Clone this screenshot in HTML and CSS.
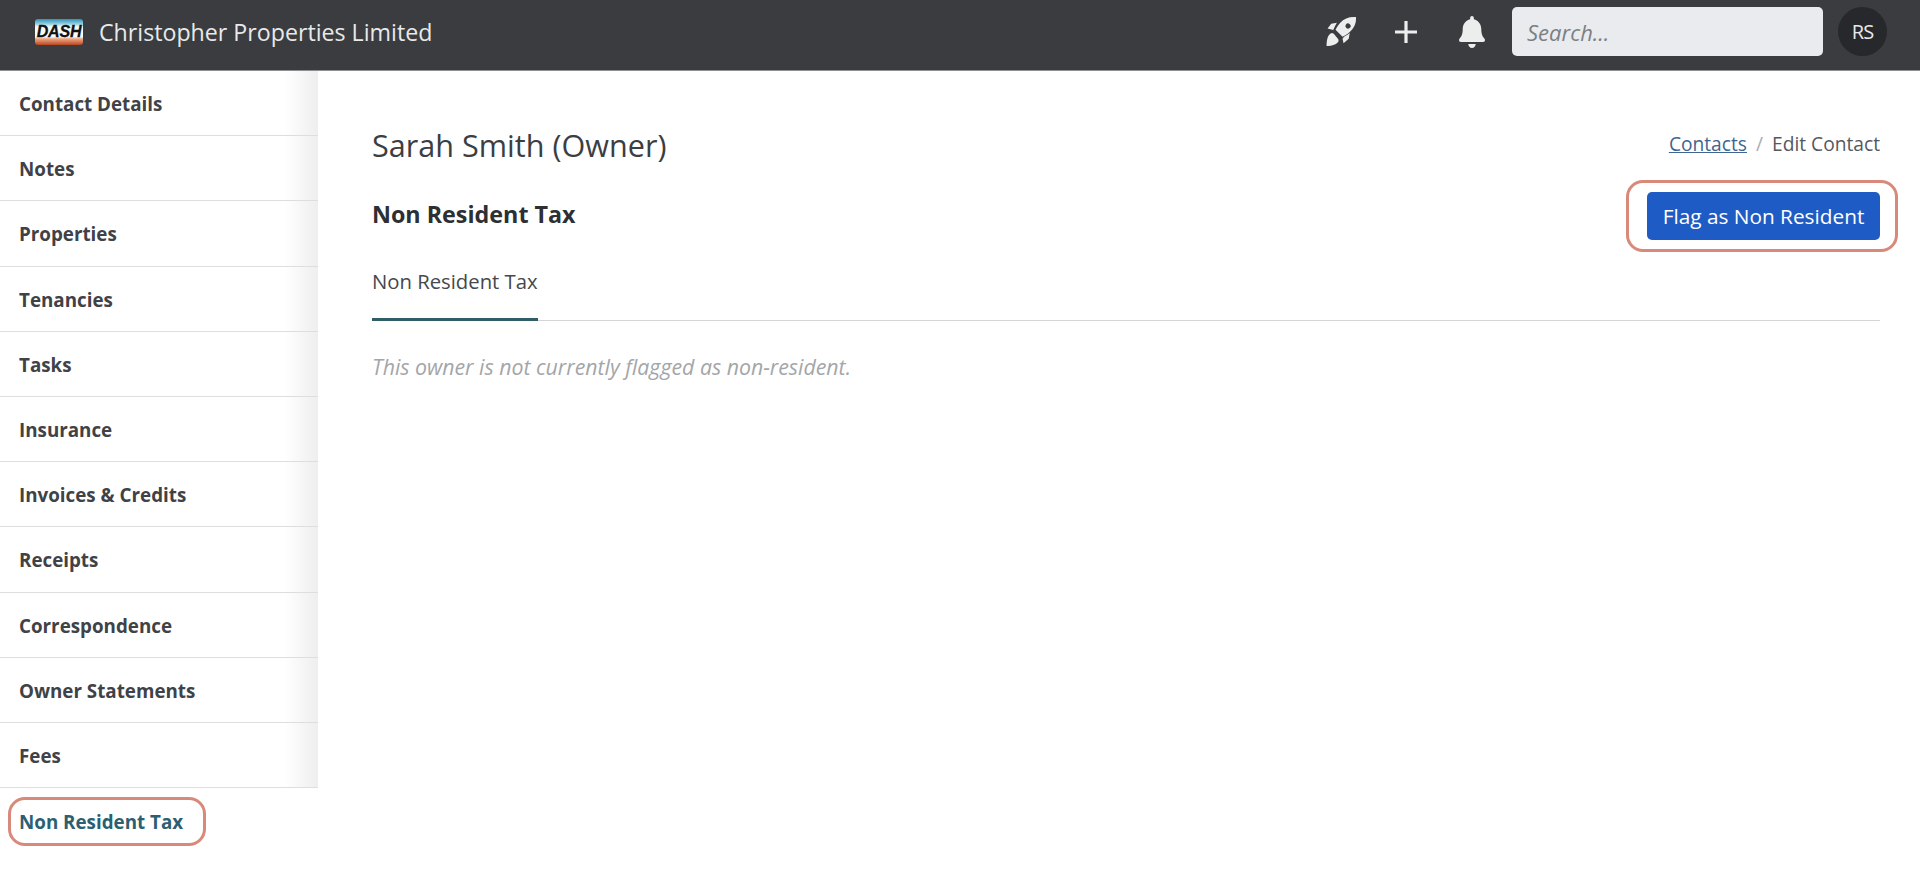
FILE: index.html
```html
<!DOCTYPE html>
<html lang="en">
<head>
  <meta charset="UTF-8" />
  <title>Non Resident Tax</title>
  <link rel="stylesheet" href="styles.css">
</head>
<body>

<header class="topbar">
  <div class="logo"><span>DASH</span></div>
  <div class="company">Christopher Properties Limited</div>
  <div class="topbar-tools">
    <svg class="icon-rocket" viewBox="0 0 32 32" aria-hidden="true">
      <path fill-rule="evenodd" d="M30 2c-6-.6-11.600 1.400-15.200 5.400-2 2.200-3.400 4.600-4.600 7l6.800 6.800c2.400-1.200 4.800-2.600 7-4.600C28 13 30.600 8 30 2zM20.300 9.200a2.500 2.500 0 1 1 3.500 3.500 2.500 2.500 0 0 1-3.500-3.500z"/>
      <path d="M11.500 7.500 6 8.500 2.500 13l5.500 1.500c1-2.600 2.200-4.900 3.500-7z"/>
      <path d="M18.500 21c2-1 4-2.300 5.500-3.500l-1 5.500-5 4.500-1-4.500z"/>
      <path d="M6.500 17.500c-2.800.8-4.800 4-5 12.500 3 .5 8.500-.5 11-3.500 1-1.200.8-2.800-.2-3.800l-3-3.500c-.8-1-1.800-1.900-2.800-1.700z"/>
    </svg>
    <svg class="icon-plus" viewBox="0 0 24 24" aria-hidden="true">
      <path d="M10.400 1h3.200v9.400H23v3.200h-9.400V23h-3.200v-9.400H1v-3.200h9.400z"/>
    </svg>
    <svg class="icon-bell" viewBox="0 0 448 512" preserveAspectRatio="none" aria-hidden="true">
      <path d="M224 512c35.320 0 63.970-28.650 63.970-64H160.030c0 35.350 28.650 64 63.970 64zm215.390-149.710c-19.320-20.760-55.470-51.990-55.470-154.290 0-77.700-54.480-139.900-127.940-155.160V32c0-17.670-14.320-32-31.980-32s-31.980 14.330-31.980 32v20.840C118.560 68.100 64.080 130.300 64.080 208c0 102.300-36.150 133.530-55.470 154.290-6 6.450-8.660 14.160-8.610 21.710.11 16.400 12.980 32 32.100 32h383.800c19.120 0 32-15.600 32.100-32 .05-7.550-2.610-15.270-8.610-21.710z"/>
    </svg>
    <input class="search" type="text" placeholder="Search...">
    <div class="avatar">RS</div>
  </div>
</header>

<div class="layout">
  <nav class="sidebar">
    <a class="nav-item">Contact Details</a>
    <a class="nav-item">Notes</a>
    <a class="nav-item">Properties</a>
    <a class="nav-item">Tenancies</a>
    <a class="nav-item">Tasks</a>
    <a class="nav-item">Insurance</a>
    <a class="nav-item">Invoices &amp; Credits</a>
    <a class="nav-item">Receipts</a>
    <a class="nav-item">Correspondence</a>
    <a class="nav-item">Owner Statements</a>
    <a class="nav-item">Fees</a>
    <a class="nav-item active"><span class="callout callout-nav">Non Resident Tax</span></a>
  </nav>

  <main class="content">
    <div class="title-row">
      <h1>Sarah Smith (Owner)</h1>
      <div class="breadcrumb"><a href="#">Contacts</a><span class="sep">/</span><span>Edit Contact</span></div>
    </div>
    <div class="section-row">
      <h2>Non Resident Tax</h2>
      <span class="callout callout-btn"><button class="btn-primary" type="button">Flag as Non Resident</button></span>
    </div>
    <div class="tabs">
      <div class="tab">Non Resident Tax</div>
    </div>
    <p class="empty-note">This owner is not currently flagged as non-resident.</p>
  </main>
</div>

</body>
</html>
```

FILE: styles.css
```css
* {
  box-sizing: border-box;
}

body {
  margin: 0;
  font-family: "Open Sans", "Noto Sans", sans-serif;
  background: #fff;
  color: #3b3e42;
}

/* top bar */
.topbar {
  display: flex;
  align-items: center;
  height: 71px;
  padding: 0 33px 7px 35px;
  background: #3a3c40;
  border-bottom: 1px solid #8d8f92;
}

.logo {
  width: 48px;
  height: 26px;
  border-radius: 3px;
  background: linear-gradient(#2f93b8 0, #8fcde0 18%, #f4fafc 30%, #fff 68%, #eea985 76%, #b9451f 100%);
  display: flex;
  align-items: center;
  justify-content: center;
}

.logo span {
  font-family: "Liberation Sans", sans-serif;
  font-weight: bold;
  font-style: italic;
  font-size: 16px;
  letter-spacing: -.2px;
  color: #111;
  -webkit-text-stroke: .3px #111;
}

.company {
  margin-left: 16px;
  font-size: 23.200px;
  color: #e8e9ea;
}

.topbar-tools {
  margin-left: auto;
  display: flex;
  align-items: center;
}

.topbar-tools svg {
  fill: #eceded;
  display: block;
}

.icon-rocket {
  width: 33px;
  height: 33px;
}

.icon-plus {
  width: 24px;
  height: 24px;
  margin-left: 36px;
}

.icon-bell {
  width: 26px;
  height: 32px;
  margin-left: 41px;
}

.search {
  width: 311px;
  height: 49px;
  margin-left: 27px;
  padding: 0 15px;
  border: 0;
  border-radius: 5px;
  background: #e9ebee;
  font-family: inherit;
  font-size: 22px;
}

.search::placeholder {
  color: #7c8085;
  font-style: italic;
}

.avatar {
  width: 49px;
  height: 49px;
  margin-left: 15px;
  border-radius: 50%;
  background: #26282b;
  color: #e8e9ea;
  font-size: 20px;
  letter-spacing: -1px;
  display: flex;
  align-items: center;
  justify-content: center;
}

/* page */
.layout {
  display: flex;
}

.sidebar {
  width: 318px;
  flex-shrink: 0;
}

.nav-item {
  display: flex;
  align-items: center;
  height: 65.200px;
  padding: 2px 0 0 19px;
  border-bottom: 1px solid #dcdee0;
  background: linear-gradient(to right, #fff 285px, #eeeeee 318px);
  font-size: 18.800px;
  font-weight: 700;
  color: #3f4246;
}

.nav-item.active {
  height: 66px;
  border-bottom: 0;
  background: #fff;
  color: #2d5f73;
}

/* red rounded marks drawn over the shot */
.callout {
  position: relative;
  display: inline-block;
}

.callout::after {
  content: "";
  position: absolute;
  border: 3px solid #d8897a;
  border-radius: 17px;
  pointer-events: none;
}

.callout-nav::after {
  top: -12px;
  bottom: -11px;
  left: -11px;
  right: -23px;
}

.callout-btn {
  display: block;
}

.callout-btn::after {
  top: -12px;
  bottom: -12px;
  left: -21px;
  right: -18px;
}

.content {
  flex: 1;
  padding: 45px 40px 0 54px;
}

.title-row,
.section-row {
  display: flex;
  justify-content: space-between;
  align-items: center;
}

h1 {
  margin: 0;
  font-size: 30.600px;
  font-weight: 400;
  line-height: 58px;
  color: #3b3e42;
}

.breadcrumb {
  margin-bottom: 4px;
  font-size: 19.200px;
  color: #55595e;
}

.breadcrumb a {
  color: #3f6590;
}

.sep {
  margin: 0 9px;
  color: #a9adb1;
}

.section-row {
  margin-top: 18px;
}

h2 {
  margin: 0 0 5px;
  font-size: 23.300px;
  font-weight: 700;
  color: #2c2f33;
}

.btn-primary {
  display: block;
  width: 233px;
  height: 48px;
  padding: 0;
  border: 0;
  border-radius: 5px;
  background: #1f5bc4;
  color: #fff;
  font-family: inherit;
  font-size: 20.800px;
}

.tabs {
  margin-top: 12px;
  border-bottom: 1px solid #d3d5d7;
  height: 69px;
  display: flex;
}

.tab {
  height: 69px;
  padding-top: 15px;
  border-bottom: 3px solid #2f5d68;
  font-size: 20.300px;
  color: #45484c;
}

.empty-note {
  margin: 31px 0 0;
  font-size: 21.300px;
  font-style: italic;
  color: #a3a6a9;
}
```
